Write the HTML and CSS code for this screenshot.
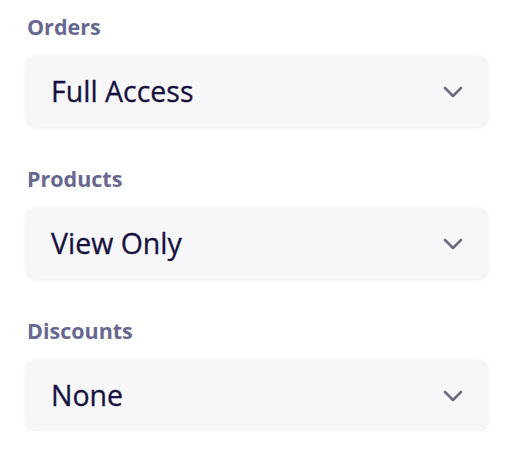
FILE: index.html
```html
<!DOCTYPE html>
<html>
<head>
<meta charset="utf-8">
<link rel="stylesheet" href="styles.css">
</head>
<body>
<div class="form">
  <div class="field">
    <div class="label">Orders</div>
    <div class="select">
      <span class="value">Full Access</span>
      <svg class="chev" width="20" height="12" viewBox="0 0 20 12"><path d="M2 2 L10 10 L18 2" fill="none" stroke="#6b6e7e" stroke-width="2.6" stroke-linecap="round" stroke-linejoin="round"/></svg>
    </div>
  </div>
  <div class="field">
    <div class="label">Products</div>
    <div class="select">
      <span class="value">View Only</span>
      <svg class="chev" width="20" height="12" viewBox="0 0 20 12"><path d="M2 2 L10 10 L18 2" fill="none" stroke="#6b6e7e" stroke-width="2.6" stroke-linecap="round" stroke-linejoin="round"/></svg>
    </div>
  </div>
  <div class="field">
    <div class="label">Discounts</div>
    <div class="select">
      <span class="value">None</span>
      <svg class="chev" width="20" height="12" viewBox="0 0 20 12"><path d="M2 2 L10 10 L18 2" fill="none" stroke="#6b6e7e" stroke-width="2.6" stroke-linecap="round" stroke-linejoin="round"/></svg>
    </div>
  </div>
</div>
</body>
</html>
```
FILE: styles.css
```css
html, body {
  margin: 0;
  padding: 0;
  background: #ffffff;
}
.form {
  font-family: "Open Sans", "Noto Sans", sans-serif;
  padding: 12px 22px 0 26px;
  display: flex;
  flex-direction: column;
  gap: 37px;
}
.field {
  display: flex;
  flex-direction: column;
  gap: 13px;
}
.label {
  font-size: 21.5px;
  font-weight: 700;
  color: #676790;
  line-height: 30px;
  padding-left: 1px;
}
.select {
  height: 72px;
  box-sizing: border-box;
  background: #f7f7fa;
  border-radius: 12px;
  box-shadow: 0 1px 4px rgba(30, 30, 60, 0.09);
  display: flex;
  align-items: center;
  justify-content: space-between;
  padding: 0 25px 0 25px;
}
.value {
  font-size: 28.5px;
  font-weight: 500;
  color: #17123d;
  -webkit-text-stroke: 0.3px #17123d;
}
.chev {
  display: block;
  margin-top: 1px;
}
```
